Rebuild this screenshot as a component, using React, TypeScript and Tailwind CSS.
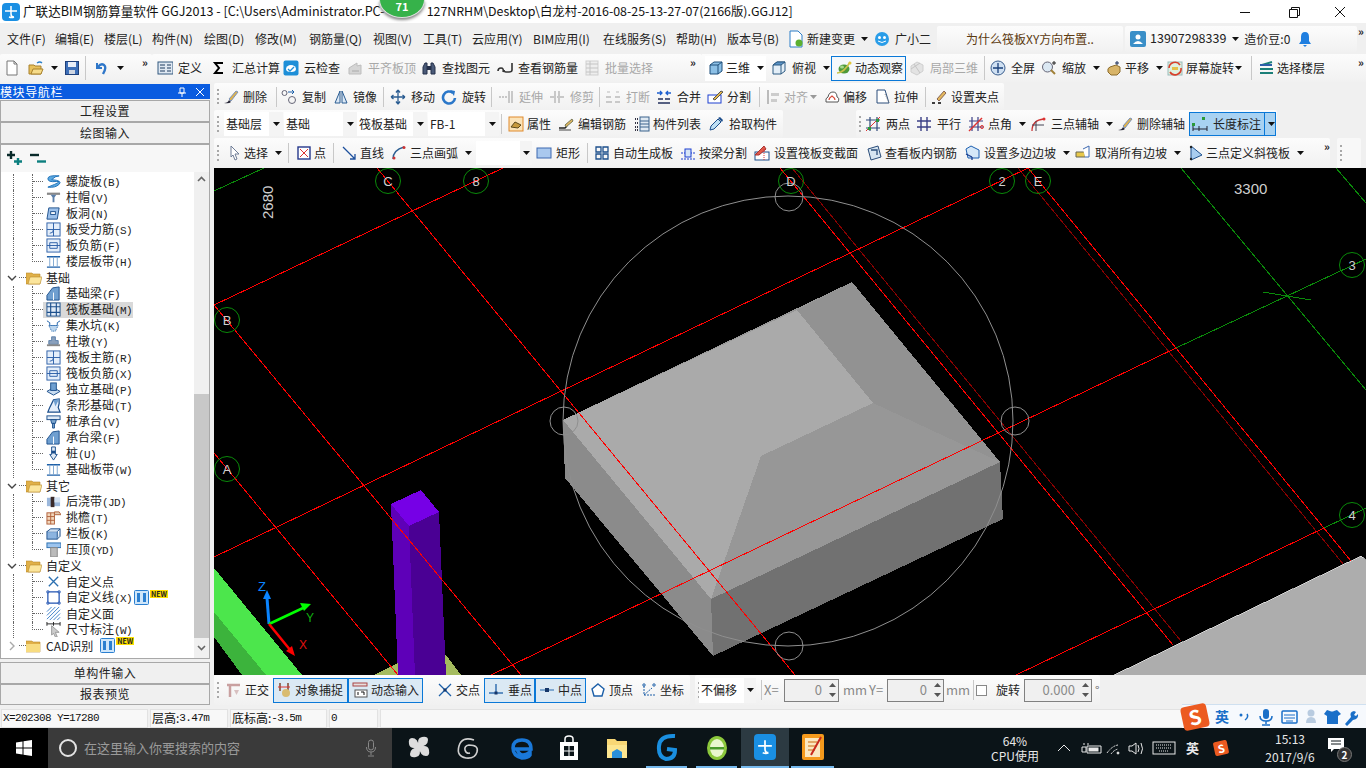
import React from "react";

const CN = "font-['Noto_Sans_CJK_SC','Noto_Sans',sans-serif]";

// small toolbar glyphs, all on a 16x16 grid
const icons: Record<string, React.ReactNode> = {
  page: <><path d="M3 1h7l3 3v11H3z" fill="#fff" stroke="#777" /><path d="M10 1v3h3" stroke="#777" /></>,
  open: <><path d="M1 5h5l1 1h6v8H1z" fill="#e8c15c" stroke="#a8812c" /><path d="M3 14l2-5h10l-2 5z" fill="#f6dc8a" stroke="#a8812c" /><path d="M9 3q3-2 5 0" stroke="#2a7fc8" strokeWidth="1.3" /></>,
  save: <><rect x="1.500" y="1.500" width="13" height="13" fill="#3d6fb8" stroke="#1e3f7a" /><rect x="4" y="2" width="8" height="5" fill="#e8eef8" /><rect x="5" y="10" width="6" height="4" fill="#cfd6e2" /></>,
  undo: <><path d="M4 3v5h5" stroke="#2f77c9" strokeWidth="2" /><path d="M5 7q3-4 6-2t-1 9" stroke="#2f77c9" strokeWidth="2.400" /></>,
  define: <><rect x="1" y="2" width="15" height="12" fill="#dfe8f2" stroke="#33597f" /><path d="M3 5h5M3 8h5M3 11h5M10 5h4M10 8h4M10 11h4" stroke="#1d3a5f" /></>,
  sigma: <path d="M12 3H4l4 5-4 5h8" stroke="#000" strokeWidth="2" />,
  cloud: <><rect x="0.500" y="0.500" width="15" height="15" rx="2" fill="#1e8fd8" /><path d="M3 9a5 4 0 0 1 10 0q0 3-5 3t-5-3" fill="#fff" /><path d="M5 9l2 2 4-4" stroke="#1e8fd8" strokeWidth="1.300" /></>,
  alignGray: <><path d="M2 14V8l8-5v3l4-1v9z" fill="#d5d5d5" stroke="#bdbdbd" /><path d="M5 11h7" stroke="#aaa" /></>,
  binoc: <><path d="M2 14V7l2-4h2v11zM10 14V3h2l2 4v7z" fill="#4a5a78" stroke="#25304a" /><rect x="6" y="6" width="4" height="4" fill="#25304a" /></>,
  rebar: <path d="M1 11q0-3 3-3t2 4M15 3v7q0 2-3 2h-3M9 12q-2 0-2-2" stroke="#333" strokeWidth="1.600" />,
  batch: <><rect x="2" y="1" width="12" height="14" fill="#eee" stroke="#cfcfcf" /><path d="M2 4h12M2 8h12M2 12h12M6 1v14" stroke="#c4c4c4" /></>,
  cube: <><path d="M2 5l4-3h8v9l-4 3H2z" fill="#8cc0e6" stroke="#1e4f7a" /><path d="M2 5h8v9M10 5l4-3" stroke="#1e4f7a" /></>,
  cubeTop: <><path d="M2 5l4-3h8v9l-4 3H2z" fill="#e3eef7" stroke="#2c5a82" /><path d="M2 5l4-3h8l-4 3z" fill="#5a92c6" stroke="#2c5a82" /><path d="M10 5v9" stroke="#2c5a82" /></>,
  orbit: <><ellipse cx="8" cy="9" rx="5.500" ry="4.500" fill="#4e9a3a" /><path d="M1 13Q8 13 14 2" stroke="#c9c24a" strokeWidth="1.600" /><circle cx="14" cy="3" r="1.500" fill="#e2c83a" /><ellipse cx="6" cy="7" rx="2" ry="1.500" fill="#a6d98e" /></>,
  cubeGray: <><path d="M2 6l6-4 6 3v6l-6 4-6-3z" fill="#e3e3e3" stroke="#cfcfcf" /><path d="M5 4l6 9M2 9l9-6" stroke="#c4c4c4" /></>,
  fit: <><circle cx="8" cy="8" r="7" fill="#cfe0f2" stroke="#3c5f8e" /><path d="M8 3v10M3 8h10" stroke="#1a3f7a" strokeWidth="1.300" /></>,
  zoom: <><circle cx="6.500" cy="7" r="5" fill="#dbe8f3" stroke="#667" /><path d="M10 10l4 4" stroke="#a08038" strokeWidth="2" /><path d="M13 1v4M11 3h4" stroke="#222" /></>,
  pan: <><path d="M2 12q-1-4 2-5l6-2 4 2v5l-3 3H5z" fill="#d8b468" stroke="#8c6c2c" /><path d="M11 1v4M9 3h4" stroke="#1a2f5a" /></>,
  rotate: <><rect x="1" y="2" width="14" height="13" fill="#dff0e0" stroke="#9bb" /><path d="M2 8a6 6 0 0 1 11-3" stroke="#d8402c" strokeWidth="1.600" /><path d="M14 8a6 6 0 0 1-11 4" stroke="#d8402c" strokeWidth="1.600" /><rect x="5" y="7" width="6" height="3" fill="#e4c04a" /></>,
  floors: <><path d="M4 5l10-3M2 9h13M2 13h13" stroke="#1b7f78" strokeWidth="2" /><path d="M2 5h12" stroke="#2c5fa8" strokeWidth="2" /></>,
  brush: <><path d="M1 14q4 0 5-3l2 2q-2 2-7 1z" fill="#223" /><path d="M6 10l7-8 2 1-7 9z" fill="#dfb24c" stroke="#7c93b8" /></>,
  copy: <><circle cx="3.500" cy="4" r="2.500" stroke="#667" /><circle cx="11" cy="11" r="3.500" stroke="#667" /><path d="M7 3h6M11 1l2 2-2 2" stroke="#1c5fa8" /></>,
  mirror: <><path d="M7 2L2 14h5zM9 2l5 12H9z" fill="#dbe8f5" stroke="#2b5d92" /></>,
  move: <path d="M8 1v14M1 8h14M8 1L6 3.500M8 1l2 2.500M8 15l-2-2.500M8 15l2-2.500M1 8l2.500-2M1 8l2.500 2M15 8l-2.500-2M15 8l-2.500 2" stroke="#2b5d92" strokeWidth="1.300" />,
  turn: <><path d="M12 4a6 6 0 1 0 2 5" stroke="#2b77c9" strokeWidth="2.600" /><path d="M9 1l5 1-1 5z" fill="#2b77c9" /></>,
  extend: <path d="M1 8h2M4 8h2M7 8h2M11 2v12M14 2v12" stroke="#b9b9b9" strokeWidth="1.500" />,
  trim: <path d="M1 8h4M8 8h1M11 8h4M6 2v12M10 2v12" stroke="#b9b9b9" strokeWidth="1.500" />,
  breakGray: <><path d="M1 13h6M10 13h5M1 8h5M10 8h5" stroke="#bbb" strokeWidth="1.500" /><path d="M5 3H2M11 3h3" stroke="#bbb" /></>,
  merge: <><path d="M2 14h12M2 10h5M9 10h5" stroke="#222f5c" strokeWidth="1.500" /><path d="M1 4h5M15 4h-5M4 2l2 2-2 2M12 2l-2 2 2 2" stroke="#1c5fd0" strokeWidth="1.300" /></>,
  split: <><rect x="1" y="6" width="13" height="8" fill="#fff" stroke="#1c3fd0" /><path d="M6 10l8-8 2 1-8 8z" fill="#e6b84a" stroke="#555" /></>,
  alignG: <><path d="M2 1v14" stroke="#bbb" strokeWidth="2" /><rect x="5" y="4" width="8" height="3" fill="#ccc" /><rect x="5" y="10" width="6" height="3" fill="#ccc" /></>,
  offset: <><path d="M2 13q-1-4 2-5 1-5 5-5t4 5q3 1 1 5z" fill="#fff" stroke="#555" /><path d="M5 11q0-2 3-4 3 2 3 4" stroke="#d84a3a" strokeWidth="1.200" /></>,
  stretch: <><path d="M2 1h8l4 13H2z" fill="#fff" stroke="#2b4d7a" /><path d="M10 5l4 9" stroke="#888" strokeDasharray="1 1" /></>,
  grip: <><path d="M1 14h3M7 14h3" stroke="#000" strokeWidth="1.500" /><path d="M6 10l7-8 2 2-7 8z" fill="#e4b85c" stroke="#865" /></>,
  prop: <><rect x="1" y="1" width="14" height="14" fill="#fbe3b8" stroke="#e08a2c" /><path d="M3 11l4-5 6 3-3 3z" fill="#c79a3e" stroke="#5c4a1c" /></>,
  editBar: <><path d="M1 12h6l2-2" stroke="#222" strokeWidth="1.500" /><path d="M7 9l7-6 1 2-7 6z" fill="#e2b860" stroke="#775" /><path d="M1 14h12" stroke="#444" /></>,
  list: <><path d="M1 3h3M1 7h3M1 11h3M1 14h3" stroke="#334" strokeDasharray="1 1" strokeWidth="2" /><rect x="6" y="1" width="9" height="14" fill="#dfe9f2" stroke="#3a628c" /><path d="M6 5h9M6 8h9M6 11h9" stroke="#3a628c" /></>,
  pick: <><path d="M2 14l1-4 7-7 3 3-7 7z" fill="#bfe0f4" stroke="#1e4f8c" /><path d="M10 2l2-1 3 3-1 2z" fill="#1e4f8c" /></>,
  twoPts: <><path d="M5 1v14M12 1v14M1 4h14M1 12h14" stroke="#2f4a7a" strokeWidth="1.200" /><path d="M1 15L15 1" stroke="#d33" /><rect x="3" y="11" width="3" height="3" fill="#2a9a3a" /><rect x="11" y="3" width="3" height="3" fill="#2a9a3a" /></>,
  parallel: <path d="M5 1v14M11 1v14M1 5h14M1 11h14" stroke="#3b3f86" strokeWidth="1.400" />,
  angle: <><path d="M4 1v14M10 1v14M1 5h14M1 11h14" stroke="#3b3f86" strokeWidth="1.200" /><path d="M1 15L14 2" stroke="#d33" strokeWidth="1.400" /><circle cx="14" cy="11" r="1.500" stroke="#d33" /></>,
  arcAxis: <><path d="M2 15q0-11 12-12" stroke="#c33" strokeWidth="1.300" /><path d="M6 15V5M2 9h12" stroke="#445" /><circle cx="14" cy="3" r="1.500" fill="#d33" /></>,
  dim: <><path d="M1 13h14M1 10v5M7 10v5M15 10v5" stroke="#223" /><rect x="0" y="7" width="3" height="3" fill="#2a9a3a" /><rect x="10" y="1" width="3" height="3" fill="#2a9a3a" /></>,
  select: <path d="M4 1l8 8H8l2 5-2 1-2-5-2 2z" fill="#fff" stroke="#6f7c96" />,
  pt: <><rect x="2" y="2" width="12" height="12" fill="#fff" stroke="#26388c" strokeWidth="1.400" /><path d="M4 4l8 8M12 4l-8 8" stroke="#d33" /></>,
  line: <path d="M2 2l12 12M14 9v5H9" stroke="#1c4f9c" strokeWidth="1.300" />,
  arc: <><path d="M2 14q0-9 11-12" stroke="#2b5d92" strokeWidth="1.300" /><circle cx="3" cy="13" r="1.500" fill="#c33" /><circle cx="13" cy="2.500" r="1.500" fill="#c33" /></>,
  rect: <rect x="1" y="3" width="14" height="10" fill="#a9c8ee" stroke="#3c68b0" />,
  autoGen: <path d="M2 2h5v5H2zM9 2h5v5H9zM2 9h5v5H2zM9 9h5v5H9z" stroke="#1c4f8c" strokeWidth="1.300" />,
  beamCut: <><path d="M1 8h14M1 14h14" stroke="#1c3fd0" strokeDasharray="2 1" /><rect x="5" y="4" width="6" height="8" fill="#d6e5f7" stroke="#1c3fd0" /></>,
  section: <><rect x="1" y="7" width="14" height="8" fill="#fff" stroke="#1c4f8c" /><path d="M1 10L10 1l2 3-7 6z" fill="#e05a4a" stroke="#a33" /><path d="M10 4v11" stroke="#d33" strokeDasharray="1 1" /></>,
  inner: <><path d="M2 4l10-3 3 11-10 3z" fill="#d6e4f0" stroke="#2b4d7a" /><path d="M5 5h6v5" stroke="#2b4d7a" strokeWidth="1.300" /></>,
  slopes: <><path d="M2 4l5-3 8 4v8H4z" fill="#d6e8f8" stroke="#1c5fb0" /><path d="M2 9l6 3M8 12v3" stroke="#1c3f90" strokeWidth="1.300" /></>,
  cancelSlope: <><path d="M1 7h9v5H1z" fill="#e8c84a" stroke="#665" /><path d="M8 4l6-3v11h-4" fill="#fff" stroke="#3c68b0" /></>,
  tilt: <><path d="M3 1v14l11-5z" fill="#a9cdf0" stroke="#1c4f8c" /><circle cx="3" cy="2" r="1.200" fill="#222" /><circle cx="3" cy="14" r="1.200" fill="#222" /></>,
  ortho: <><path d="M2 3h13" stroke="#c9a0a0" strokeWidth="2.500" /><path d="M5 3v12" stroke="#c9a0a0" strokeWidth="2.500" /><path d="M9 8h5l-2.500 5z" fill="#d8c0c0" /></>,
  snap: <><path d="M3 1v8M11 1v8" stroke="#7a3a20" strokeWidth="1.400" /><path d="M1 5h12" stroke="#d33" /><circle cx="9" cy="11" r="4" fill="#d9bc70" /></>,
  dyn: <><rect x="1" y="1" width="14" height="3" fill="#e6dede" stroke="#a44" /><rect x="3" y="8" width="12" height="7" fill="#fff" stroke="#555" /><path d="M6 10v3M9 10h3v3" stroke="#111" /></>,
  cross: <><path d="M2 2l12 12M14 2L2 14" stroke="#1c5fa8" strokeWidth="1.300" /><rect x="6.500" y="6.500" width="3" height="3" fill="#16376a" /></>,
  perp: <><path d="M1 11h14" stroke="#1c5fa8" strokeWidth="1.300" /><path d="M8 2v9" stroke="#1c5fa8" strokeWidth="1.300" /><rect x="6.500" y="9.500" width="3" height="3" fill="#16376a" /></>,
  mid: <><path d="M1 8h14" stroke="#7fa8d0" strokeWidth="2" /><rect x="6" y="6" width="4" height="4" fill="#16376a" /></>,
  vertex: <path d="M8 2l6 5-2 7H4L2 7z" fill="#fff" stroke="#1c5fa8" strokeWidth="1.400" />,
  coord: <><path d="M3 4v9h11M3 13l8-7" stroke="#1c5fa8" strokeDasharray="2 1" /><circle cx="3" cy="3" r="1.200" stroke="#1c5fa8" /><circle cx="13" cy="3" r="1.200" stroke="#1c5fa8" /></>,
  // tree
  spiral: <path d="M14 2Q2 1 2 5t9 3-9 6q8 1 12-3T6 6q4-4 8-4" fill="#5aa8e0" stroke="#1c6fb8" />,
  cap: <><path d="M1 4h14" stroke="#888" strokeWidth="2.400" /><path d="M5 5h6l-2 3H7zM7 8h2v5H7z" fill="#5b7faa" /></>,
  hole: <><path d="M3 2h11l-2 12H1z" fill="#9cc0ea" stroke="#1c4f8c" /><rect x="5" y="6" width="5" height="3" fill="#fff" stroke="#1c4f8c" /></>,
  boardBar: <><rect x="1" y="1" width="14" height="14" fill="#e4eefa" stroke="#2b5fa8" /><path d="M1 8h14M8 1v14" stroke="#2b5fa8" /><path d="M4 12q4 0 4-4" stroke="#2b5fa8" /></>,
  boardNeg: <><rect x="1" y="1" width="14" height="14" fill="#e4eefa" stroke="#2b5fa8" /><path d="M1 8h14M4 5h8v6H4z" stroke="#2b5fa8" /></>,
  strip: <><path d="M1 3h14M1 14h14" stroke="#1c5fa8" strokeWidth="1.500" /><path d="M4 3v11M12 3v11M8 3v11" stroke="#7fa8d0" /></>,
  fBeam: <><path d="M1 15V10l6-8 7-1v14z" fill="#6f9fd0" stroke="#1c4f8c" /><path d="M8 15V7" stroke="#fff" /></>,
  raft: <><rect x="1" y="1" width="14" height="14" fill="#dfeaf6" stroke="#1c4f8c" /><path d="M1 5h14M1 11h14M5 1v14M11 1v14" stroke="#1c4f8c" strokeWidth="1.200" /></>,
  pit: <><path d="M1 3l3 2v3h8V5l3-2" stroke="#1c5fa8" /><path d="M3 8h10l-3 6H6z" fill="#bcd6ee" stroke="#1c5fa8" strokeDasharray="1 1" /></>,
  pier: <><path d="M6 3h4v4h3v4H3V7h3z" fill="#8aa0bc" stroke="#5b7faa" /><path d="M1 12h14" stroke="#888" strokeWidth="2" /></>,
  iso: <><path d="M1 10l7-4 7 4-7 4z" fill="#c8dcf0" stroke="#1c4f8c" /><rect x="5" y="1" width="6" height="8" fill="#6f9fd0" stroke="#1c4f8c" /></>,
  strip2: <><path d="M2 15l2-5 4-8 6-1v5l-1 4 2 5z" fill="#e4eefa" stroke="#1c4f8c" strokeWidth="1.300" /><path d="M8 2l6-1-4 8z" fill="#6f9fd0" /></>,
  capPile: <><rect x="1" y="2" width="14" height="4" fill="#dfeaf6" stroke="#1c4f8c" /><path d="M5 6h6l-1 4H6zM7 10h2v5H7z" fill="#7fa8d0" stroke="#1c4f8c" /></>,
  pile: <><path d="M6 1h4v8h2l-4 6-4-6h2z" fill="#dfeaf6" stroke="#1c4f8c" /><rect x="6" y="5" width="4" height="3" fill="#1c4f8c" /></>,
  pour: <><rect x="1" y="4" width="14" height="9" fill="#9cb8dc" /><rect x="5" y="3" width="4" height="11" fill="#3a2a2a" /><path d="M9 4h6v5H9z" fill="#d4e2f2" /></>,
  eave: <><rect x="1" y="3" width="8" height="12" fill="#f2d6bc" stroke="#b0603a" /><path d="M1 7h8M1 11h8M5 3v12" stroke="#b0603a" /><path d="M9 2h5l2 3H9z" fill="#e6cdb4" stroke="#b0603a" /></>,
  para: <><rect x="1" y="6" width="11" height="8" fill="#8cb4e0" stroke="#1c4f8c" /><path d="M1 6l4-3h10l-3 3M15 3v8l-3 3" fill="#cfe0f2" stroke="#1c4f8c" /></>,
  press: <><rect x="1" y="1" width="15" height="5" fill="#9cc4ee" stroke="#2b6fb0" /><rect x="5" y="6" width="7" height="10" fill="#bbb" stroke="#888" /></>,
  cPt: <path d="M3 3l10 10M13 3L3 13" stroke="#2b6fb0" strokeWidth="1.400" />,
  cLine: <><rect x="2" y="2" width="12" height="12" stroke="#1c4fb0" strokeWidth="1.300" /><path d="M1 1h2v2H1zM13 1h2v2h-2zM1 13h2v2H1zM13 13h2v2h-2z" fill="#fff" stroke="#1c4fb0" /></>,
  cFace: <path d="M1 6l5-5M1 10l9-9M1 14L14 1M4 15L15 4M8 15l7-7M12 15l3-3" stroke="#3c7fc8" />,
  cDim: <><path d="M1 2h14M1 0v4M15 0v4M8 0v4" stroke="#222" /><path d="M6 4l8 7h-4l2 5-2 0-2-4-2 2z" fill="#ccc" stroke="#999" /></>,
};

const Ic = ({ n, s = 16 }: { n: string; s?: number }) => (
  <svg width={s} height={s} viewBox="0 0 16 16" fill="none" className="shrink-0">
    {icons[n]}
  </svg>
);

const Arrow = ({ c = "ml-[7px]", gray = false }: { c?: string; gray?: boolean }) => (
  <svg width="7" height="4" viewBox="0 0 7 4" className={`shrink-0 ${c}`}>
    <path d="M0 0h7L3.500 4z" fill={gray ? "#999" : "#111"} />
  </svg>
);

const Sep = ({ c = "mx-[3px]" }: { c?: string }) => <div className={`h-[20px] w-px shrink-0 bg-[#c8c8c8] ${c}`} />;

const Grip = () => (
  <div className="mx-[3px] flex h-[16px] w-[3px] shrink-0 flex-col justify-between">
    {[0, 1, 2, 3].map((i) => (
      <span key={i} className="h-[2px] w-[2px] bg-[#a8a8a8]" />
    ))}
  </div>
);

const More = () => (
  <div className="shrink-0 self-start pt-[1px] text-[11px] font-bold leading-[14px] text-[#222]">»</div>
);

type ToolProps = { w: string; i?: string; t?: string; gray?: boolean; drop?: boolean; gap?: string; dropC?: string };

const Tool = ({ w, i, t, gray, drop, gap = "ml-[5px]", dropC }: ToolProps) => (
  <div className={`flex shrink-0 items-center ${w}`}>
    {i && <Ic n={i} />}
    {t && <span className={`${gap} whitespace-nowrap ${gray ? "text-[#a8a8a8]" : "text-[#222]"}`}>{t}</span>}
    {drop && <Arrow c={dropC} />}
  </div>
);

const Seg = ({ c, children }: { c: string; children: React.ReactNode }) => (
  <div className={`flex h-full shrink-0 items-center rounded-[2px] bg-gradient-to-b from-[#fcfcfc] to-[#f1f1f1] ${c}`}>{children}</div>
);

const TitleBar = () => (
  <div className="relative flex h-[23px] shrink-0 items-center bg-white">
    <div className="ml-[2px] flex h-[18px] w-[18px] items-center justify-center rounded-[4px] bg-[#1a8fe3]">
      <svg width="14" height="14" viewBox="0 0 14 14" fill="none">
        <path d="M7 1v8q0 3 3 3M1 6h12M10 12q-2 1-5 0" stroke="#fff" strokeWidth="1.500" />
      </svg>
    </div>
    <span className="ml-[3px] whitespace-nowrap text-[12.6px] text-[#111]">广联达BIM钢筋算量软件 GGJ2013 - [C:\Users\Administrator.PC-</span>
    <span className="ml-[42px] whitespace-nowrap text-[12.4px] text-[#111]">127NRHM\Desktop\白龙村-2016-08-25-13-27-07(2166版).GGJ12]</span>
    <div className="ml-auto flex items-center">
      <svg width="120" height="16" viewBox="0 0 120 16" fill="none" className="mr-[6px]">
        <path d="M0 8.500h10" stroke="#111" />
        <path d="M49.500 5.500h8v8h-8zM51.500 5V3.500h8v8H58" stroke="#111" />
        <path d="M95 3l10 10M105 3L95 13" stroke="#111" />
      </svg>
    </div>
    <div className="absolute left-[379px] top-0 flex h-[18px] w-[46px] items-center justify-center rounded-b-[23px_18px] border-x border-b border-[#ddd] bg-[#36b24a] pb-[4px] text-[11px] font-bold leading-none text-white shadow-[0_2px_3px_#888]">
      71
    </div>
  </div>
);

const menus: [string, string][] = [
  ["文件(F)", "w-[48px]"], ["编辑(E)", "w-[49px]"], ["楼层(L)", "w-[48px]"], ["构件(N)", "w-[52px]"],
  ["绘图(D)", "w-[51px]"], ["修改(M)", "w-[54px]"], ["钢筋量(Q)", "w-[64px]"], ["视图(V)", "w-[50px]"],
  ["工具(T)", "w-[49px]"], ["云应用(Y)", "w-[61px]"], ["BIM应用(I)", "w-[70px]"], ["在线服务(S)", "w-[73px]"],
  ["帮助(H)", "w-[51px]"], ["版本号(B)", "w-[61px]"],
];

const MenuBar = () => (
  <div className="flex h-[31px] shrink-0 items-center bg-[#f0f0f0] pl-[7px] text-[12px] text-[#222]">
    {menus.map(([t, w]) => (
      <div key={t} className={`shrink-0 whitespace-nowrap ${w}`}>{t}</div>
    ))}
    <div className="flex w-[86px] shrink-0 items-center">
      <svg width="16" height="18" viewBox="0 0 16 18" fill="none">
        <path d="M2 1h8l4 4v12H2z" fill="#fff" stroke="#2c7fc8" />
        <circle cx="11" cy="13" r="3.500" fill="#5cb030" />
      </svg>
      <span className="ml-[3px]">新建变更</span>
      <Arrow c="ml-[6px]" />
    </div>
    <svg width="16" height="16" viewBox="0 0 16 16" className="shrink-0">
      <circle cx="8" cy="8" r="7" fill="#2a9de8" />
      <circle cx="5.500" cy="6.500" r="1.500" fill="#fff" />
      <circle cx="10.500" cy="6.500" r="1.500" fill="#fff" />
      <path d="M4 10q4 3 8 0" stroke="#fff" fill="none" />
    </svg>
    <span className="ml-[5px] w-[36px] shrink-0">广小二</span>
    <div className="ml-[6px] flex h-[26px] w-[186px] shrink-0 items-center rounded-[2px] bg-gradient-to-b from-[#fcfcfc] to-[#f1f1f1] pl-[29px] text-[#5c3a10]">为什么筏板XY方向布置..</div>
    <div className="ml-[2px] flex h-[26px] w-[232px] shrink-0 items-center rounded-[2px] bg-gradient-to-b from-[#fcfcfc] to-[#f1f1f1] pl-[5px]">
      <div className="flex h-[16px] w-[16px] items-center justify-center rounded-[2px] bg-[#3a8fc8]">
        <svg width="12" height="12" viewBox="0 0 12 12">
          <circle cx="6" cy="4" r="2.500" fill="#fff" />
          <path d="M1 11q5-6 10 0z" fill="#fff" />
        </svg>
      </div>
      <span className="ml-[4px] text-[12.5px]">13907298339</span>
      <Arrow c="ml-[6px]" />
      <span className="ml-[5px] whitespace-nowrap">造价豆:0</span>
      <svg width="14" height="16" viewBox="0 0 14 16" className="ml-[8px]">
        <path d="M7 1q4 0 4 5v4l2 3H1l2-3V6q0-5 4-5zM5 14h4l-2 2z" fill="#1f7fe0" />
      </svg>
    </div>
    <div className="ml-px self-start text-[11px] font-bold">»</div>
  </div>
);

const Row1 = () => (
  <div className="flex h-[29px] shrink-0 items-center bg-[#f0f0f0] pb-[1px] text-[12px]">
    <Seg c="w-[152px] pl-[4px]">
      <Tool w="w-[24px]" i="page" />
      <Tool w="w-[23px]" i="open" />
      <div className="w-[13px]"><Arrow c="ml-0" /></div>
      <Tool w="w-[21px]" i="save" />
      <div className="h-[24px] w-px bg-[#c8c8c8]" />
      <Tool w="w-[7px]" />
      <Tool w="w-[24px]" i="undo" />
      <div className="w-[25px]"><Arrow c="ml-0" /></div>
      <More />
    </Seg>
    <Seg c="w-[550px] pl-[5px]">
      <Tool w="w-[54px]" i="define" t="定义" />
      <Tool w="w-[72px]" i="sigma" t="汇总计算" />
      <Tool w="w-[64px]" i="cloud" t="云检查" />
      <Tool w="w-[74px]" i="alignGray" t="平齐板顶" gray />
      <Tool w="w-[76px]" i="binoc" t="查找图元" />
      <Tool w="w-[87px]" i="rebar" t="查看钢筋量" />
      <Tool w="w-[106px]" i="batch" t="批量选择" gray />
      <More />
    </Seg>
    <div className="flex h-full shrink-0 items-center bg-gradient-to-b from-[#fcfcfc] to-[#f1f1f1] pl-[3px]">
      <div className="flex h-[25px] w-[61px] items-center bg-white pl-[3px]">
        <Ic n="cube" />
        <span className="ml-[2px] text-[#222]">三维</span>
        <Arrow c="ml-[7px]" />
      </div>
      <div className="w-[5px]" />
      <Tool w="w-[60px]" i="cubeTop" t="俯视" drop />
      <div className="flex h-[25px] w-[75px] items-center border border-[#0a78d7] bg-[#f4f8fb] pl-[4px]">
        <Ic n="orbit" />
        <span className="ml-[3px] whitespace-nowrap text-[#222]">动态观察</span>
      </div>
      <div className="w-[3px]" />
      <Tool w="w-[75px]" i="cubeGray" t="局部三维" gray />
      <div className="h-[24px] w-px bg-[#c8c8c8]" />
      <div className="w-[5px]" />
      <Tool w="w-[51px]" i="fit" t="全屏" />
      <Tool w="w-[65px]" i="zoom" t="缩放" drop />
      <Tool w="w-[61px]" i="pan" t="平移" drop gap="ml-[3px]" />
      <Tool w="w-[84px]" i="rotate" t="屏幕旋转" drop dropC="ml-[1px]" gap="ml-[3px]" />
      <div className="h-[24px] w-px bg-[#c8c8c8]" />
      <div className="w-[6px]" />
      <Tool w="w-[100px]" i="floors" t="选择楼层" gap="ml-[3px]" />
      <More />
      <div className="w-[4px]" />
    </div>
  </div>
);

const Row2 = () => (
  <div className="flex h-[27px] shrink-0 items-center text-[12px]">
    <Seg c="w-[790px]">
      <Grip />
      <Tool w="w-[53px]" i="brush" t="删除" gap="ml-[4px]" />
      <Sep c="ml-0 mr-[4px]" />
      <Tool w="w-[52px]" i="copy" t="复制" />
      <Tool w="w-[50px]" i="mirror" t="镜像" gap="ml-[4px]" />
      <Sep c="ml-0 mr-[6px]" />
      <Tool w="w-[51px]" i="move" t="移动" />
      <Tool w="w-[50px]" i="turn" t="旋转" />
      <Sep c="ml-0 mr-[6px]" />
      <Tool w="w-[51px]" i="extend" t="延伸" gray />
      <Tool w="w-[50px]" i="trim" t="修剪" gray />
      <Sep c="ml-0 mr-[5px]" />
      <Tool w="w-[51px]" i="breakGray" t="打断" gray />
      <Tool w="w-[51px]" i="merge" t="合并" />
      <Tool w="w-[52px]" i="split" t="分割" gap="ml-[4px]" />
      <Sep c="ml-0 mr-[6px]" />
      <div className="flex w-[58px] shrink-0 items-center">
        <Ic n="alignG" />
        <span className="ml-[2px] text-[#a8a8a8]">对齐</span>
        <Arrow gray c="ml-[2px]" />
      </div>
      <Tool w="w-[51px]" i="offset" t="偏移" gap="ml-[3px]" />
      <Tool w="w-[50px]" i="stretch" t="拉伸" gap="ml-[3px]" />
      <Sep c="ml-0 mr-[5px]" />
      <Tool w="w-[65px]" i="grip" t="设置夹点" gap="ml-[4px]" />
    </Seg>
  </div>
);

const Combo = ({ w, t, pad = "pl-[2px]", arrowW = "w-[14px]" }: { w: string; t: string; pad?: string; arrowW?: string }) => (
  <div className={`flex h-[24px] shrink-0 items-center bg-white ${w} ${pad}`}>
    <span className="flex-1 whitespace-nowrap text-[#222]">{t}</span>
    <div className={`flex h-full shrink-0 items-center justify-center bg-[#f4f4f4] ${arrowW}`}><Arrow c="ml-0" /></div>
  </div>
);

const Row3 = () => (
  <div className="flex h-[28px] shrink-0 items-center text-[12px]">
    <Seg c="w-[569px]">
      <Grip />
      <Combo w="w-[59px] ml-[1px]" t="基础层" />
      <Combo w="w-[73px] ml-[1px]" t="基础" />
      <Combo w="w-[70px]" t="筏板基础" />
      <Combo w="w-[71px] ml-px" t="FB-1" />
      <Sep c="ml-[2px] mr-[6px]" />
      <Tool w="w-[50px]" i="prop" t="属性" gap="ml-[3px]" />
      <Tool w="w-[76px]" i="editBar" t="编辑钢筋" gap="ml-[4px]" />
      <Tool w="w-[74px]" i="list" t="构件列表" gap="ml-[3px]" />
      <Tool w="w-[70px]" i="pick" t="拾取构件" />
    </Seg>
    <div className="w-[73px] shrink-0" />
    <Seg c="w-[421px]">
      <Grip />
      <Tool w="w-[51px]" i="twoPts" t="两点" />
      <Tool w="w-[52px]" i="parallel" t="平行" />
      <Tool w="w-[62px]" i="angle" t="点角" gap="ml-[4px]" drop />
      <Tool w="w-[87px]" i="arcAxis" t="三点辅轴" drop />
      <Tool w="w-[72px]" i="brush" t="删除辅轴" gap="ml-[4px]" />
      <div className="flex h-[24px] w-[87px] shrink-0 items-center border border-[#0a78d7] bg-[#a8d2f2]">
        <div className="flex h-full w-[75px] items-center border-r border-[#0a78d7] pl-[2px]">
          <Ic n="dim" />
          <span className="ml-[5px] whitespace-nowrap text-[#222]">长度标注</span>
        </div>
        <Arrow c="ml-[3px]" />
      </div>
    </Seg>
  </div>
);

const Row4 = () => (
  <div className="flex h-[30px] shrink-0 items-center text-[12px]">
    <Seg c="w-[1116px]">
      <Grip />
      <div className="w-[4px]" />
      <Tool w="w-[60px]" i="select" t="选择" gap="ml-[1px]" drop />
      <Sep c="ml-px mr-[7px]" />
      <Tool w="w-[37px]" i="pt" t="点" gap="ml-[2px]" />
      <Sep c="ml-0 mr-[7px]" />
      <Tool w="w-[50px]" i="line" t="直线" gap="ml-[3px]" />
      <Tool w="w-[85px]" i="arc" t="三点画弧" gap="ml-[3px]" drop />
      <Combo w="w-[56px] ml-0" t="" arrowW="w-[12px]" />
      <div className="w-[4px]" />
      <Tool w="w-[51px]" i="rect" t="矩形" gap="ml-[4px]" />
      <Sep c="ml-0 mr-[6px]" />
      <Tool w="w-[86px]" i="autoGen" t="自动生成板" gap="ml-[3px]" />
      <Tool w="w-[74px]" i="beamCut" t="按梁分割" gap="ml-[3px]" />
      <Tool w="w-[112px]" i="section" t="设置筏板变截面" gap="ml-[4px]" />
      <Tool w="w-[98px]" i="inner" t="查看板内钢筋" gap="ml-[3px]" />
      <Tool w="w-[111px]" i="slopes" t="设置多边边坡" gap="ml-[4px]" drop />
      <Tool w="w-[113px]" i="cancelSlope" t="取消所有边坡" gap="ml-[4px]" drop />
      <Tool w="w-[136px]" i="tilt" t="三点定义斜筏板" gap="ml-[2px]" drop />
      <More />
    </Seg>
    <div className="w-[7px] shrink-0" />
    <div className="flex h-full w-[24px] items-center rounded-[2px] bg-[#f8f8f8]"><Grip /></div>
  </div>
);

const Canvas = () => {
  const bubbles: [number, number, string][] = [
    [388, 181, "C"], [476, 181, "8"], [227, 320, "B"], [227, 469, "A"], [791, 181, "D"],
    [1002, 181, "2"], [1038, 181, "E"], [1352, 265, "3"], [1352, 515, "4"],
  ];
  const red: number[][] = [
    [214, 305, 503, 168], [214, 557, 1028, 168], [491, 675, 1176, 348], [1016, 675, 1324, 528],
    [377, 168, 795, 675], [214, 305, 521, 675], [214, 453, 398, 675], [780, 168, 1173, 645], [1028, 168, 1351, 561],
  ];
  const dark: number[][] = [[792, 168, 1181, 641], [1018, 168, 1344, 565]];
  const green: number[][] = [
    [214, 191, 264, 168], [1181, 168, 1366, 390], [1336, 168, 1366, 203], [1176, 348, 1366, 259],
    [1324, 528, 1366, 508], [1263, 292, 1311, 300],
  ];
  return (
    <div className="h-[507px] shrink-0 overflow-hidden bg-black">
      <svg width="1152" height="507" viewBox="214 168 1152 507" className="block">
        <g shapeRendering="crispEdges">
          {dark.map((l) => <line key={l.join()} x1={l[0]} y1={l[1]} x2={l[2]} y2={l[3]} stroke="#8a0000" />)}
          {green.map((l) => <line key={l.join()} x1={l[0]} y1={l[1]} x2={l[2]} y2={l[3]} stroke="#0a8a0a" />)}
        </g>
        {/* slab */}
        <g shapeRendering="crispEdges">
          <polygon points="563,420 711,599 713,656 565,478" fill="#8b8b8b" />
          <polygon points="711,599 1000,462 1003,519 713,656" fill="#717171" />
          <polygon points="563,420 852,282 1000,462 711,599" fill="#979797" />
          <polygon points="797,310 852,282 1000,462 873,403" fill="#929292" />
          <polygon points="563,420 797,310 873,403 761,456 711,599" fill="#aaaaaa" />
        </g>
        {/* column and beams */}
        <g shapeRendering="crispEdges">
          <polygon points="374,675 398,663 446,655 461,675" fill="#a4bb5e" />
          <polygon points="391,504 409,526 415,675 398,675" fill="#5e00b8" />
          <polygon points="409,526 439,512 446,675 415,675" fill="#4a0094" />
          <polygon points="391,504 421,490 439,512 409,526" fill="#7600e6" />
          <polygon points="214,568 302,675 266,675 214,612" fill="#4ce64c" />
          <polygon points="214,612 266,675 242,675 214,637" fill="#3cb33c" />
          <polygon points="1114,675 1361,556 1366,560 1366,675" fill="#adadad" stroke="#fff" strokeWidth="0.600" />
        </g>
        <g shapeRendering="crispEdges">
          {red.map((l) => <line key={l.join()} x1={l[0]} y1={l[1]} x2={l[2]} y2={l[3]} stroke="#ff0000" />)}
        </g>
        {/* orbit ring */}
        <g fill="none" stroke="#8f8f8f">
          <circle cx="788" cy="421" r="225" />
          <circle cx="564" cy="421" r="14" />
          <circle cx="1015" cy="421" r="14" />
          <circle cx="789" cy="197" r="14" />
          <circle cx="789" cy="646" r="14" />
        </g>
        {bubbles.map(([x, y, t]) => (
          <g key={t}>
            <circle cx={x} cy={y} r="12.500" fill="none" stroke="#0a8a0a" />
            <text x={x} y={y + 5} textAnchor="middle" fontSize="13" fontFamily="Liberation Sans" fill="#cfcfcf">{t}</text>
          </g>
        ))}
        <text x="1234" y="194" fontSize="15" fontFamily="Liberation Sans" fill="#cfcfcf">3300</text>
        <text transform="translate(273,219) rotate(-90)" fontSize="15" fontFamily="Liberation Sans" fill="#cfcfcf">2680</text>
        {/* axis gizmo */}
        <path d="M269 624l-2-26" stroke="#0a84ff" strokeWidth="3" />
        <polygon points="267,590 263,599 271,599" fill="#0a84ff" />
        <path d="M269 624l34-16" stroke="#00ff00" strokeWidth="2.500" />
        <polygon points="311,604 300,603 304,611" fill="#00ff00" />
        <path d="M269 624l22 27" stroke="#ff0000" strokeWidth="2.500" />
        <polygon points="295,656 286,651 292,646" fill="#ff0000" />
        <text x="258" y="591" fontSize="13" fontFamily="Liberation Sans" fill="#0a84ff">Z</text>
        <text x="306" y="622" fontSize="12" fontFamily="Liberation Sans" fill="#10b010">Y</text>
        <text x="299" y="649" fontSize="12" fontFamily="Liberation Sans" fill="#e01010">X</text>
      </svg>
    </div>
  );
};

const SpinBox = ({ w, v }: { w: string; v: string }) => (
  <div className={`flex h-[23px] shrink-0 items-center border border-[#808080] bg-[#f0f0f0] ${w}`}>
    <span className="flex-1 pr-[4px] text-right text-[13px] text-[#8a8a8a]">{v}</span>
    <div className="flex w-[12px] flex-col items-center gap-[6px]">
      <svg width="7" height="4" viewBox="0 0 7 4"><path d="M0 4h7L3.500 0z" fill="#555" /></svg>
      <svg width="7" height="4" viewBox="0 0 7 4"><path d="M0 0h7L3.500 4z" fill="#555" /></svg>
    </div>
  </div>
);

const Boxed = ({ w, i, t, gap, fill }: { w: string; i: string; t: string; gap: string; fill: string }) => (
  <div className={`flex h-[25px] shrink-0 items-center border border-[#0a78d7] pl-[3px] ${w} ${fill}`}>
    <Ic n={i} />
    <span className={`${gap} whitespace-nowrap text-[#222]`}>{t}</span>
  </div>
);

const BottomBar = () => (
  <div className="flex h-[30px] shrink-0 items-center text-[12px]">
    <Seg c="w-[476px]">
      <Grip />
      <div className="w-[2px]" />
      <Tool w="w-[48px]" i="ortho" t="正交" gap="ml-[4px]" />
      <Boxed w="w-[75px]" i="snap" t="对象捕捉" gap="ml-[2px]" fill="bg-[#dbe9f4]" />
      <Boxed w="w-[75px]" i="dyn" t="动态输入" gap="ml-[3px]" fill="bg-[#dbe9f4]" />
      <div className="w-[14px]" />
      <Tool w="w-[47px]" i="cross" t="交点" gap="ml-[3px]" />
      <Boxed w="w-[51px]" i="perp" t="垂点" gap="ml-[4px]" fill="bg-[#dbe9f4]" />
      <Boxed w="w-[51px]" i="mid" t="中点" gap="ml-[3px]" fill="bg-[#dbe9f4]" />
      <div className="w-[4px]" />
      <Tool w="w-[51px]" i="vertex" t="顶点" gap="ml-[3px]" />
      <Tool w="w-[47px]" i="coord" t="坐标" gap="ml-[3px]" />
    </Seg>
    <Seg c="ml-[5px] w-[405px]">
      <Grip />
      <div className="ml-[-5px] flex h-[25px] w-[57px] shrink-0 items-center bg-white pl-[2px]">
        <span className="flex-1 whitespace-nowrap text-[#222]">不偏移</span>
        <div className="flex h-full w-[12px] items-center justify-center bg-[#f4f4f4]"><Arrow c="ml-0" /></div>
      </div>
      <Sep c="ml-[5px] mr-[2px]" />
      <span className="w-[20px] text-[13px] text-[#888]">X=</span>
      <SpinBox w="w-[55px]" v="0" />
      <span className="ml-[4px] w-[26px] text-[13px] text-[#888]">mm</span>
      <span className="w-[18px] text-[13px] text-[#888]">Y=</span>
      <SpinBox w="w-[57px]" v="0" />
      <span className="ml-[2px] w-[25px] text-[13px] text-[#888]">mm</span>
      <Sep c="ml-[2px] mr-[2px]" />
      <div className="h-[11px] w-[11px] border border-[#888] bg-white" />
      <span className="ml-[9px] w-[28px] text-[#222]">旋转</span>
      <SpinBox w="w-[68px]" v="0.000" />
      <span className="ml-[3px] text-[#666]">°</span>
    </Seg>
  </div>
);

type Node = { n: string; s?: string; i?: string; g?: "open" | "closed"; last?: boolean; sel?: boolean; isNew?: boolean };

const tree: Node[] = [
  { n: "螺旋板", s: "(B)", i: "spiral" }, { n: "柱帽", s: "(V)", i: "cap" }, { n: "板洞", s: "(N)", i: "hole" },
  { n: "板受力筋", s: "(S)", i: "boardBar" }, { n: "板负筋", s: "(F)", i: "boardNeg" }, { n: "楼层板带", s: "(H)", i: "strip", last: true },
  { n: "基础", g: "open" },
  { n: "基础梁", s: "(F)", i: "fBeam" }, { n: "筏板基础", s: "(M)", i: "raft", sel: true }, { n: "集水坑", s: "(K)", i: "pit" },
  { n: "柱墩", s: "(Y)", i: "pier" }, { n: "筏板主筋", s: "(R)", i: "boardBar" }, { n: "筏板负筋", s: "(X)", i: "boardNeg" },
  { n: "独立基础", s: "(P)", i: "iso" }, { n: "条形基础", s: "(T)", i: "strip2" }, { n: "桩承台", s: "(V)", i: "capPile" },
  { n: "承台梁", s: "(F)", i: "fBeam" }, { n: "桩", s: "(U)", i: "pile" }, { n: "基础板带", s: "(W)", i: "strip", last: true },
  { n: "其它", g: "open" },
  { n: "后浇带", s: "(JD)", i: "pour" }, { n: "挑檐", s: "(T)", i: "eave" }, { n: "栏板", s: "(K)", i: "para" }, { n: "压顶", s: "(YD)", i: "press", last: true },
  { n: "自定义", g: "open" },
  { n: "自定义点", i: "cPt" }, { n: "自定义线", s: "(X)", i: "cLine", isNew: true }, { n: "自定义面", i: "cFace" }, { n: "尺寸标注", s: "(W)", i: "cDim", last: true },
  { n: "CAD识别", g: "closed", isNew: true },
];

const NewBadge = () => (
  <>
    <svg width="15" height="15" viewBox="0 0 15 15" className="ml-[2px] shrink-0">
      <rect x="0.500" y="0.500" width="14" height="14" rx="1" fill="#cfe6fa" stroke="#2b7fd0" />
      <path d="M3 3h3v9H3zM9 3h3v9H9z" fill="#2b7fd0" />
    </svg>
    <span className="ml-[1px] self-start bg-[#ffe000] px-px text-[7px] font-bold leading-[8px] text-[#222]">NEW</span>
  </>
);

const TreeRow = ({ r, dashed }: { r: Node; dashed: boolean }) => {
  if (r.g) {
    return (
      <div className="flex h-[16px] items-center">
        <svg width="10" height="10" viewBox="0 0 10 10" fill="none" className="ml-[6px] shrink-0">
          {r.g === "open" ? <path d="M1 3l4 4 4-4" stroke="#444" strokeWidth="1.400" /> : <path d="M3 1l4 4-4 4" stroke="#aaa" strokeWidth="1.400" />}
        </svg>
        <span className="ml-[2px] w-[7px] border-b border-dotted border-[#666]" />
        <svg width="16" height="14" viewBox="0 0 16 14" className="shrink-0">
          <path d="M0 2h6l1 1h7v10H0z" fill="#e0b048" stroke="#b98c2c" strokeWidth="0.600" />
          {r.g === "open" ? <path d="M2 13l2-7h12l-2 7z" fill="#fbe59c" stroke="#b98c2c" strokeWidth="0.600" /> : <rect x="0" y="5" width="14" height="8" fill="#f8dc80" />}
        </svg>
        <span className="ml-[4px] flex items-center text-[12px] text-[#222]">
          {r.n}
          {r.isNew && <span className="ml-[5px] flex items-center self-stretch"><NewBadge /></span>}
        </span>
      </div>
    );
  }
  return (
    <div className="flex h-[16px]">
      <div className={`ml-[12px] w-[19px] shrink-0 ${dashed ? "border-l border-dotted border-[#666]" : ""}`} />
      <div className={`w-[11px] shrink-0 border-l border-dotted border-[#666] ${r.last ? "h-[8px] border-b" : "h-full"}`}>
        {!r.last && <div className="h-[8px] border-b border-dotted border-[#666]" />}
      </div>
      <div className={`flex items-center pl-[3px] pr-[1px] text-[12px] text-[#222] ${r.sel ? "bg-[#d9d9d9]" : ""}`}>
        <Ic n={r.i!} s={15} />
        <span className="ml-[5px] whitespace-nowrap">
          {r.n}
          {r.s && <span className="font-['Liberation_Mono',monospace] text-[11px] tracking-[-0.6px]">{r.s}</span>}
        </span>
        {r.isNew && <NewBadge />}
      </div>
    </div>
  );
};

const PanelBtn = ({ t }: { t: string }) => (
  <div className="flex h-[22px] items-center justify-center border border-[#a8a8a8] bg-[#f0f0f0] text-[12px] tracking-[0.5px] text-[#222]">{t}</div>
);

const LeftPanel = () => (
  <div className="flex w-[214px] shrink-0 flex-col bg-[#f0f0f0] pr-[4px] pt-[1px]">
    <div className="flex h-[15px] shrink-0 items-center bg-[#0a5ce0] text-[12px] leading-none tracking-[0.6px] text-white">
      <span>模块导航栏</span>
      <svg width="10" height="10" viewBox="0 0 10 10" className="ml-auto mr-[9px]" fill="none">
        <path d="M3 1h4v5H3zM1 6h8M5 6v4" stroke="#fff" />
      </svg>
      <svg width="8" height="8" viewBox="0 0 8 8" className="mr-[6px]" fill="none">
        <path d="M0 0l8 8M8 0L0 8" stroke="#fff" />
      </svg>
    </div>
    <div className="mt-px"><PanelBtn t="工程设置" /></div>
    <PanelBtn t="绘图输入" />
    <div className="flex h-[515px] shrink-0 flex-col border border-[#a8a8a8] bg-white">
      <div className="flex h-[27px] shrink-0 items-center gap-[5px] bg-[#f7f7f7] pl-[5px]">
        <svg width="18" height="16" viewBox="0 0 18 16" fill="none">
          <path d="M5 1v8M1 5h8" stroke="#0a2a2a" strokeWidth="2.400" />
          <path d="M12 8v7M8 11.500h8" stroke="#0c7f7f" strokeWidth="2.400" />
        </svg>
        <svg width="18" height="16" viewBox="0 0 18 16" fill="none">
          <path d="M1 5h9" stroke="#0a2a2a" strokeWidth="2.400" />
          <path d="M8 11.500h9" stroke="#0c7f7f" strokeWidth="2.400" />
        </svg>
      </div>
      <div className="flex min-h-0 flex-1">
        <div className="min-w-0 flex-1 overflow-hidden pt-[2px]">
          {tree.map((r, k) => (
            <TreeRow key={k} r={r} dashed={k < 29} />
          ))}
        </div>
        <div className="flex w-[15px] shrink-0 flex-col items-center bg-[#f0f0f0]">
          <svg width="9" height="6" viewBox="0 0 9 6" fill="none" className="mt-[4px] shrink-0">
            <path d="M1 5l3.500-3.500L8 5" stroke="#666" strokeWidth="1.600" />
          </svg>
          <div className="mt-[212px] h-[244px] w-full shrink-0 bg-[#c8c8c8]" />
          <svg width="9" height="6" viewBox="0 0 9 6" fill="none" className="mt-[7px] shrink-0">
            <path d="M1 1l3.500 3.500L8 1" stroke="#666" strokeWidth="1.600" />
          </svg>
        </div>
      </div>
    </div>
    <div className="mt-[3px]"><PanelBtn t="单构件输入" /></div>
    <PanelBtn t="报表预览" />
  </div>
);

const StatusBar = () => {
  const cell = "flex h-[19px] items-center border border-[#e2e2e2] bg-[#f8f8f8] pl-[1px]";
  const mono = "font-['Liberation_Mono',monospace] text-[11px] tracking-[-0.6px]";
  return (
    <div className="relative flex h-[23px] shrink-0 items-center gap-[2px] bg-[#f0f0f0] pl-[1px] pt-[3px] text-[12px] text-[#111]">
      <div className={`${cell} w-[147px] ${mono}`}>X=202308 Y=17280</div>
      <div className={`${cell} w-[78px]`}>层高:<span className={mono}>3.47m</span></div>
      <div className={`${cell} w-[97px]`}>底标高:<span className={mono}>-3.5m</span></div>
      <div className={`${cell} w-[49px] ${mono}`}>0</div>
      <div className="h-[19px] flex-1 border border-[#e2e2e2] bg-[#f8f8f8]" />
      <div className="absolute bottom-[0px] right-0 flex h-[24px] w-[184px] items-center border-t border-[#cfe0f0] bg-[#f6f9fd] text-[#1a6fc8]">
        <div className="flex h-[24px] w-[26px] -rotate-12 items-center justify-center rounded-[4px] bg-[#ec5a20] text-[20px] font-bold leading-none text-white">S</div>
        <span className="ml-[7px] text-[14px] font-bold">英</span>
        <svg width="124" height="18" viewBox="0 0 124 18" fill="#1a6fc8" className="ml-[7px]">
          <circle cx="5" cy="7" r="1.500" />
          <path d="M11 6q2 3-2 6" stroke="#1a6fc8" strokeWidth="1.500" fill="none" />
          <rect x="27" y="1" width="6" height="10" rx="3" />
          <path d="M24 8q0 5 6 5t6-5M30 13v3M26 17h8" stroke="#1a6fc8" strokeWidth="1.500" fill="none" />
          <rect x="46" y="3" width="15" height="12" rx="1" fill="none" stroke="#1a6fc8" strokeWidth="1.500" />
          <path d="M48 7h11M48 10h11M50 13h7" stroke="#1a6fc8" />
          <circle cx="75" cy="5" r="3.500" fill="#b8cbe0" />
          <path d="M70 15q0-6 5-6t5 6z" fill="#b8cbe0" />
          <path d="M91 2l3 1q2 1 4 0l3-1 4 4-3 2v8H91V8l-3-2z" />
          <path d="M109 16l6-7q-2-5 3-6l2 1-2 3 2 1 2-2q1 5-5 6l-6 6z" />
        </svg>
      </div>
    </div>
  );
};

const Running = ({ w, c, children }: { w: string; c: string; children: React.ReactNode }) => (
  <div className={`flex h-full shrink-0 items-center justify-center border-b-2 border-[#76b9ed] ${w} ${c}`}>{children}</div>
);

const Taskbar = () => (
  <div className="flex h-[40px] shrink-0 items-center bg-[#0b1418] text-[12px] text-[#e8e8e8]">
    <div className="flex h-full w-[48px] shrink-0 items-center justify-center bg-black">
      <svg width="16" height="16" viewBox="0 0 16 16" fill="#fff">
        <path d="M0 2.500l6.500-1V7.500H0zM7.500 1.300L16 0v7.500H7.500zM0 8.500h6.500v6L0 13.500zM7.500 8.500H16V16l-8.500-1.300z" />
      </svg>
    </div>
    <div className="flex h-full w-[344px] shrink-0 items-center bg-[#3a3a3a] pl-[11px]">
      <div className="h-[18px] w-[18px] shrink-0 rounded-full border-[2px] border-[#e4e4e4]" />
      <span className="ml-[7px] text-[13px] text-[#9a9a9a]">在这里输入你要搜索的内容</span>
      <svg width="12" height="18" viewBox="0 0 12 18" fill="none" className="ml-auto mr-[15px]">
        <rect x="3.500" y="1" width="5" height="10" rx="2.500" stroke="#888" />
        <path d="M1.500 8q0 5 4.500 5t4.500-5M6 13v3M3 17h6" stroke="#888" />
      </svg>
    </div>
    <div className="flex h-full w-[15px] shrink-0" />
    {/* pinned apps */}
    <svg width="24" height="24" viewBox="0 0 24 24" fill="#ddd" className="shrink-0">
      <path d="M12 11Q3 14 2 8T5 2q6 0 7 9zM12 11q9-3 10 3t-3 6q-6 0-7-9zM12 11q3 9-3 10t-6-3q0-6 9-7zM12 11Q9 2 15 1t6 3q0 6-9 7z" />
    </svg>
    <svg width="24" height="24" viewBox="0 0 24 24" fill="none" stroke="#cfcfcf" strokeWidth="1.600" className="ml-[25px] shrink-0">
      <path d="M18 4Q6 0 3 10t7 12q9 1 11-6T13 9q-5 1-4 5t5 3" />
    </svg>
    <svg width="24" height="26" viewBox="0 0 24 26" fill="none" className="ml-[30px] shrink-0">
      <path d="M4 14h17Q21 5 12 5T3 13t9 10q6 0 8-3v-3q-3 3-7 3t-6-6" stroke="#1a78d8" strokeWidth="3.500" />
    </svg>
    <svg width="20" height="26" viewBox="0 0 20 26" className="ml-[25px] shrink-0">
      <path d="M6 8V4q0-3 4-3t4 3v4" fill="none" stroke="#fff" strokeWidth="1.500" />
      <path d="M1 7h18v18H1z" fill="#fff" />
      <path d="M5 11h4.500v4.500H5zM10.500 11H15v4.500h-4.500zM5 16.500h4.500V21H5zM10.500 16.500H15V21h-4.500z" fill="#0b1418" />
    </svg>
    <svg width="24" height="24" viewBox="0 0 24 24" className="ml-[26px] shrink-0">
      <path d="M2 3h8l2 2h10v17H2z" fill="#f8d775" />
      <rect x="2" y="9" width="20" height="13" fill="#fce58f" />
      <path d="M7 22v-6l5-3 5 3v6z" fill="#2a8fd8" />
    </svg>
    <Running w="w-[41px]" c="ml-[17px]">
      <svg width="22" height="28" viewBox="0 0 22 28" fill="none">
        <path d="M19 3Q4 2 3 13t7 13q9 0 9-9l-8-1" stroke="#1a8fe0" strokeWidth="4" />
      </svg>
    </Running>
    <Running w="w-[41px]" c="ml-[9px]">
      <svg width="24" height="28" viewBox="0 0 24 28">
        <ellipse cx="12" cy="15" rx="10" ry="12" fill="#8cc83c" />
        <ellipse cx="12" cy="15" rx="7" ry="9" fill="#eaf7d0" />
        <rect x="5" y="14" width="14" height="2.500" fill="#4a9a2c" />
      </svg>
    </Running>
    <Running w="w-[48px]" c="ml-[4px] bg-[#2c3a42]">
      <div className="flex h-[26px] w-[22px] items-center justify-center rounded-[4px] bg-[#1a8fe3]">
        <svg width="16" height="18" viewBox="0 0 14 14" fill="none">
          <path d="M7 1v8q0 3 3 3M1 6h12M10 12q-2 1-5 0" stroke="#fff" strokeWidth="1.500" />
        </svg>
      </div>
    </Running>
    <Running w="w-[43px]" c="ml-[2px]">
      <svg width="24" height="28" viewBox="0 0 24 28">
        <rect x="1" y="1" width="22" height="26" rx="2" fill="#f59a1c" />
        <rect x="4" y="5" width="15" height="19" fill="#fbe8c0" />
        <path d="M7 9h9M7 13h9M7 17h7" stroke="#c86a10" />
        <path d="M10 22L20 4" stroke="#c8281c" strokeWidth="2" />
      </svg>
    </Running>
    {/* tray */}
    <div className="ml-auto flex h-full items-center">
      <div className="flex w-[70px] flex-col items-center text-[12px] leading-[15px]">
        <span>64%</span>
        <span>CPU使用</span>
      </div>
      <svg width="119" height="16" viewBox="0 0 119 16" fill="none" stroke="#e8e8e8" className="ml-[7px]">
        <path d="M1 11l6-6 6 6" />
        <path d="M26 4h2M30 4h2M25 7h4v5h-4zM30 6h14v7H30z" />
        <rect x="32" y="8" width="9" height="3" fill="#e8e8e8" />
        <path d="M50 13q5-7 11-8M54 14q3-4 7-5" strokeDasharray="2 1" />
        <circle cx="61" cy="13" r="1" fill="#e8e8e8" />
        <path d="M72 6h3l4-3v11l-4-3h-3zM81 5q2 4 0 7M84 3q3 6 0 11" />
        <rect x="96" y="2" width="22" height="12" />
        <path d="M99 5h16M99 8h16M102 11h10" strokeDasharray="1 1" />
      </svg>
      <span className="ml-[10px] text-[13px] font-bold">英</span>
      <div className="ml-[15px] flex h-[14px] w-[14px] -rotate-12 items-center justify-center rounded-[2px] bg-[#ec5a20] text-[11px] font-bold leading-none text-white">S</div>
      <div className="ml-[24px] flex w-[76px] flex-col items-center text-[12px] leading-[18px]">
        <span>15:13</span>
        <span>2017/9/6</span>
      </div>
      <div className="relative mr-[20px] h-[20px] w-[18px]">
        <svg width="16" height="14" viewBox="0 0 16 14" fill="#fff"><path d="M0 0h16v11H6l-3 3v-3H0z" /><path d="M3 3h10M3 6h10" stroke="#0b1418" /></svg>
        <div className="absolute bottom-[-4px] right-[-6px] flex h-[15px] w-[15px] items-center justify-center rounded-full border border-[#777] bg-[#333] text-[10px] font-bold leading-none text-white">2</div>
      </div>
    </div>
  </div>
);

const App = () => {
  return (
    <div className={`flex h-[768px] w-[1366px] flex-col overflow-hidden bg-[#f0f0f0] ${CN}`}>
      <TitleBar />
      <MenuBar />
      <Row1 />
      <div className="flex h-[622px] shrink-0">
        <LeftPanel />
        <div className="flex min-w-0 flex-1 flex-col">
          <Row2 />
          <Row3 />
          <Row4 />
          <Canvas />
          <BottomBar />
        </div>
      </div>
      <StatusBar />
      <Taskbar />
    </div>
  );
};

export default App;
